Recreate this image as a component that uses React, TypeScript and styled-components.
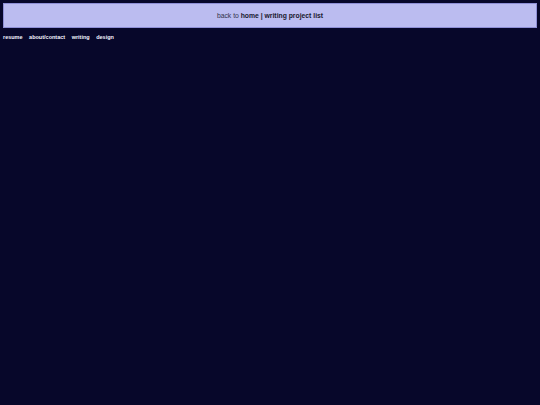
import React from "react";
import styled, { createGlobalStyle } from "styled-components";

const Global = createGlobalStyle`
  html, body { margin: 0; padding: 0; background: #07072a; }
  body { font-family: "Liberation Sans", Arial, sans-serif; }
`;

const Page = styled.div`
  min-height: 405px;
  padding: 3px;
  box-sizing: border-box;
  background: #07072a;
`;

const Banner = styled.div`
  height: 23px;
  border: 1px solid #8e8fd6;
  background: #bbbcf0;
  display: flex;
  align-items: center;
  justify-content: center;
  font-size: 6.8px;
  color: #33334a;
`;

const BannerLink = styled.a`
  font-weight: bold;
  color: #18182e;
  text-decoration: none;
`;

const Nav = styled.nav`
  display: flex;
  gap: 6.5px;
  margin-top: 5px;
  line-height: 8px;
`;

const NavLink = styled.a`
  font-size: 5.5px;
  font-weight: bold;
  color: #f4f4ff;
  text-decoration: none;
`;

export default function App() {
  return (
    <>
      <Global />
      <Page>
        <Banner>
          <span>
            back to <BannerLink href="#">home</BannerLink>{" "}
            <BannerLink as="span">|</BannerLink>{" "}
            <BannerLink href="#">writing project list</BannerLink>
          </span>
        </Banner>
        <Nav>
          <NavLink href="#">resume</NavLink>
          <NavLink href="#">about/contact</NavLink>
          <NavLink href="#">writing</NavLink>
          <NavLink href="#">design</NavLink>
        </Nav>
      </Page>
    </>
  );
}
